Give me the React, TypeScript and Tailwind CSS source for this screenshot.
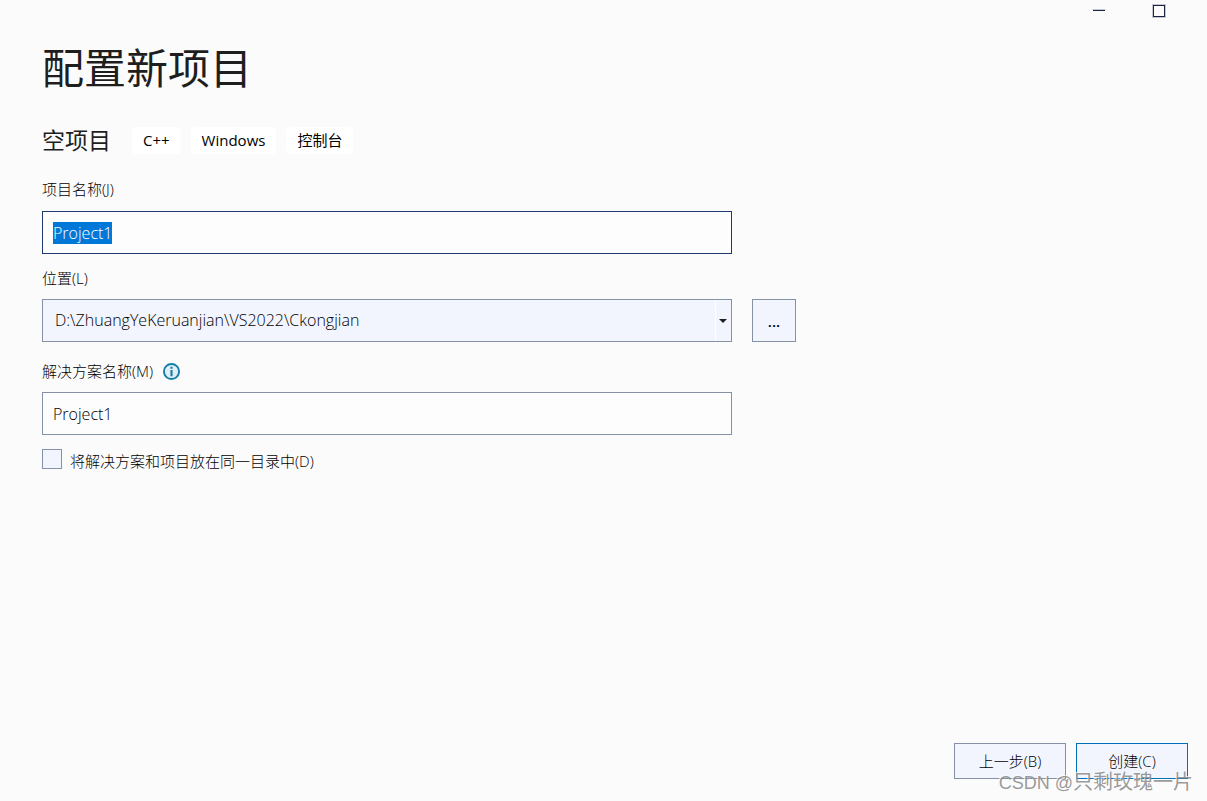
import { useEffect, useRef } from "react";

const tags = ["C++", "Windows", "控制台"];

export default function App() {
  const nameRef = useRef<HTMLInputElement>(null);

  useEffect(() => {
    nameRef.current?.focus();
    nameRef.current?.select();
  }, []);

  return (
    <div className="relative flex min-h-screen flex-col bg-[#fbfbfb] font-['Open_Sans','Noto_Sans_CJK_SC',sans-serif] text-[15px] leading-[21px] font-light text-black">
      <header className="flex h-6 justify-end gap-7 pr-8">
        <button type="button" aria-label="最小化" className="h-6 w-8">
          <svg width="32" height="24" viewBox="0 0 32 24" fill="none">
            <path d="M9.5 9.5h13" stroke="#c3c7d0" />
            <path d="M10 10.5h12" stroke="#1b2440" />
          </svg>
        </button>
        <button type="button" aria-label="最大化" className="h-6 w-8">
          <svg width="32" height="24" viewBox="0 0 32 24" fill="none">
            <rect x="9.5" y="4.5" width="13" height="13" stroke="#c3c7d0" />
            <rect x="10.5" y="5.5" width="11" height="11" stroke="#1b2440" />
          </svg>
        </button>
      </header>

      <main className="flex-1 px-[42px] pt-[14px]">
        <h1 className="text-[42px] leading-[60px] font-normal text-[#1e1e1e]">配置新项目</h1>

        <div className="mt-[28px] flex items-center gap-[21px]">
          <h2 className="text-[23px] leading-[28px] font-normal text-[#1e1e1e]">空项目</h2>
          <ul className="flex gap-[10px]">
            {tags.map((tag) => (
              <li key={tag} className="rounded-[4px] bg-white px-[11px] py-[3px] font-normal">
                {tag}
              </li>
            ))}
          </ul>
        </div>

        <form className="mt-[25px] max-w-[754px]">
          <label htmlFor="name" className="block">项目名称(J)</label>
          <input
            id="name"
            ref={nameRef}
            defaultValue="Project1"
            className="mt-[11px] block h-[43px] w-[calc(100%-64px)] border border-[#1f3a6e] bg-[#fdfdfd] px-[10px] text-[16px] outline-none selection:bg-[#0078d7] selection:text-white"
          />

          <label htmlFor="location" className="mt-[14px] block">位置(L)</label>
          <div className="mt-[10px] flex gap-5">
            <div className="relative flex-1">
              <select
                id="location"
                className="block h-[43px] w-full appearance-none border border-[#8591a5] bg-[#f2f5fd] px-3 text-[16px] outline-none"
              >
                <option>D:\ZhuangYeKeruanjian\VS2022\Ckongjian</option>
              </select>
              <span className="pointer-events-none absolute inset-y-px right-px flex w-4 items-center border-l border-white pl-[3px]">
                <svg width="8" height="4" viewBox="0 0 8 4">
                  <path d="M0 0h8L4 4z" fill="#1e1e1e" />
                </svg>
              </span>
            </div>
            <button type="button" className="h-[43px] w-11 border border-[#8591a5] bg-[#f2f5fd] pt-[2px] font-semibold">...</button>
          </div>

          <div className="mt-[19px] flex items-center gap-[10px]">
            <label htmlFor="solution">解决方案名称(M)</label>
            <svg width="17" height="17" viewBox="0 0 16 16" role="img" aria-label="信息">
              <circle cx="8" cy="8" r="7.1" fill="#e1eff5" stroke="#147ea8" strokeWidth="1.8" />
              <path d="M7 3.5h2v2H7zM7 6.7h2v5.8H7z" fill="#147ea8" />
            </svg>
          </div>
          <input
            id="solution"
            defaultValue="Project1"
            className="mt-[10px] block h-[43px] w-[calc(100%-64px)] border border-[#8591a5] bg-[#fdfdfd] px-[10px] text-[16px] outline-none"
          />

          <div className="mt-[14px] flex gap-2">
            <input
              id="samedir"
              type="checkbox"
              className="h-5 w-5 appearance-none border border-[#8591a5] bg-[#f2f5fd] checked:bg-[#0078d7]"
            />
            <label htmlFor="samedir" className="pt-[2px]">将解决方案和项目放在同一目录中(D)</label>
          </div>
        </form>
      </main>

      <footer className="flex justify-end gap-[10px] pr-[19px] pb-[22px]">
        <button type="button" className="h-9 w-28 border border-[#8591a5] bg-[#f2f5fd]">上一步(B)</button>
        <button type="button" className="h-9 w-28 border border-[#0070b8] bg-[#f2f5fd]">创建(C)</button>
      </footer>

      <p className="pointer-events-none absolute right-[14px] bottom-1 font-['Liberation_Sans','Noto_Sans_CJK_SC',sans-serif] text-[20px] leading-[28px] font-normal text-[#808080cc] [text-shadow:-1px_-1px_0_#ffffffb0]">
        <span className="text-[18px]">CSDN @</span>只剩玫瑰一片
      </p>
    </div>
  );
}
